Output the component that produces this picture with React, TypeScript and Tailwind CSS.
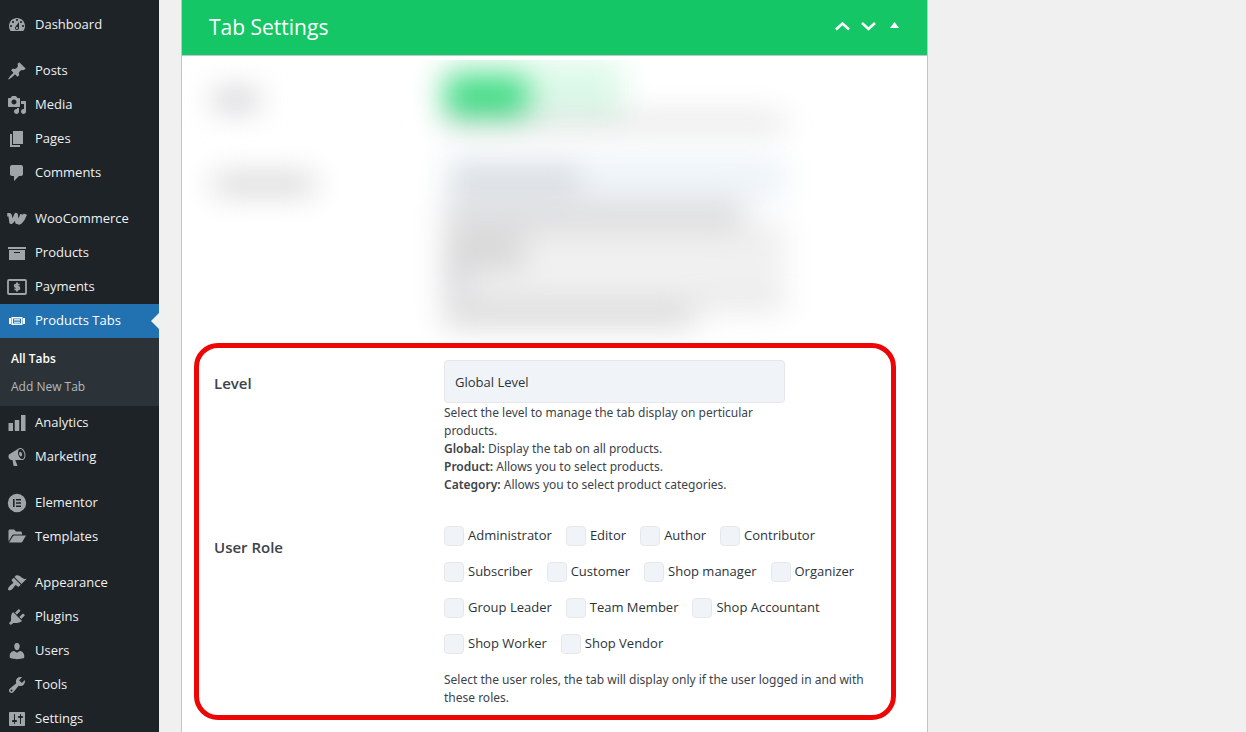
import React from 'react';

type IconProps = { d: string; className?: string };

const Icon = ({ d, className = 'w-5 h-5' }: IconProps) => (
  <svg viewBox="0 0 20 20" className={className} fill="currentColor" fillRule="evenodd" aria-hidden="true">
    <path d={d} />
  </svg>
);

const WooIcon = () => (
  <svg viewBox="0 0 20 20" className="w-5 h-5" fill="none" stroke="currentColor" strokeWidth="3.6" strokeLinejoin="round" aria-hidden="true">
    <path d="M.2 5.800h1.800c.8 0 1.100.4 1.200 1.200l.9 6.200c2.200-1.600 3.800-4 5-7.600l.9 7.600c2.600-1.600 3.900-4 4.900-7.800" />
    <path d="M10.500 13.200c1.200 1 2.400.6 3.400-.4 2-2 3.200-4.400 4.400-7.600" />
  </svg>
);

const PaymentsIcon = () => (
  <svg viewBox="0 0 20 20" className="w-5 h-5" fill="none" stroke="currentColor" aria-hidden="true">
    <rect x="1" y="3" width="18" height="14" rx="1" strokeWidth="1.8" />
    <path d="M12.600 7.600H8.900a1.200 1.200 0 0 0 0 2.400h2.200a1.200 1.200 0 0 1 0 2.400H7.400M10 5.500v9" strokeWidth="1.900" />
  </svg>
);

const ElementorIcon = () => (
  <svg viewBox="0 0 20 20" className="w-5 h-5" fill="currentColor" fillRule="evenodd" aria-hidden="true">
    <path d="M10 .8a9.200 9.200 0 1 0 0 18.400A9.200 9.200 0 0 0 10 .8zM6 6h1.600v8H6zM9 6h5v1.500H9zM9 9.250h5v1.500H9zM9 12.500h5V14H9z" />
  </svg>
);

const paths = {
  dashboard: 'M3.76 16h12.48c1.1-1.37 1.76-3.11 1.76-5 0-4.42-3.58-8-8-8s-8 3.58-8 8c0 1.89.66 3.63 1.76 5zM10 4c.55 0 1 .45 1 1s-.45 1-1 1-1-.45-1-1 .45-1 1-1zM6 6c.55 0 1 .45 1 1s-.45 1-1 1-1-.45-1-1 .45-1 1-1zm8 0c.55 0 1 .45 1 1s-.45 1-1 1-1-.45-1-1 .45-1 1-1zm-5.37 5.55L12 7v6c0 1.1-.9 2-2 2s-2-.9-2-2c0-.57.24-1.08.63-1.45zM4 10c.55 0 1 .45 1 1s-.45 1-1 1-1-.45-1-1 .45-1 1-1zm12 0c.55 0 1 .45 1 1s-.45 1-1 1-1-.45-1-1 .45-1 1-1zm-5 3c0-.55-.45-1-1-1s-1 .45-1 1 .45 1 1 1 1-.45 1-1z',
  post: 'M10.44 3.02l1.82-1.82 6.36 6.35-1.83 1.82c-1.05-.68-2.48-.57-3.41.36l-.75.75c-.92.93-1.04 2.35-.35 3.41l-1.83 1.82-2.41-2.41-2.8 2.79c-.42.42-3.38 2.71-3.8 2.29s1.86-3.39 2.28-3.81l2.79-2.79L4.1 9.36l1.83-1.82c1.05.69 2.48.57 3.4-.36l.75-.75c.93-.92 1.05-2.35.36-3.41z',
  media: 'M13 11V4c0-.55-.45-1-1-1h-1.67L9 1H5L3.67 3H2c-.55 0-1 .45-1 1v7c0 .55.45 1 1 1h10c.55 0 1-.45 1-1zM7 4.500c1.380 0 2.500 1.120 2.500 2.500S8.380 9.500 7 9.500 4.500 8.380 4.500 7 5.620 4.500 7 4.500zM14 6h5v10.500c0 1.380-1.120 2.500-2.500 2.500S14 17.880 14 16.500s1.120-2.500 2.500-2.500c.17 0 .34.02.5.05V9h-3V6zm-4 8.050V13h2v3.500c0 1.380-1.120 2.500-2.500 2.500S7 17.880 7 16.500 8.120 14 9.500 14c.17 0 .34.02.5.05z',
  page: 'M6 15V2h10v13H6zm-1 1h8v2H3V5h2v11z',
  comments: 'M5 2h9c1.1 0 2 .9 2 2v7c0 1.1-.9 2-2 2h-2l-5 5v-5H5c-1.1 0-2-.9-2-2V4c0-1.1.9-2 2-2z',
  archive: 'M19 4v2H1V4h18zM2 7h16v10H2V7zm11 3V9H7v1h6z',
  slides: 'M4.500 14V6h11v8h-11zM2 13V7h2v6H2zm4-5.500v5h8v-5H6zM16 7h2v6h-2V7zm-3 2.400V8.300H7v1.100h6zm0 2.400v-1.100H7v1.100h6z',
  chart: 'M18.500 18V2h-4.500v16h4.500zm-6.250 0V7h-4.500v11h4.500zM6 18v-8H1.500v8H6z',
  megaphone: 'M18.15 5.94c.46 1.62.38 3.22-.02 4.48-.42 1.28-1.26 2.18-2.3 2.48-.16.06-.26.06-.4.06-.06.02-.12.02-.18.02-.06.02-.14.02-.22.02h-6.8l2.22 5.5c.02.14-.06.26-.14.34-.08.1-.24.16-.34.16H6.95c-.1 0-.26-.06-.34-.16-.08-.08-.16-.2-.14-.34l-1-5.5H4.25l-.02-.02c-.5.06-1.08-.18-1.54-.62s-.88-1.08-1.06-1.88c-.24-.8-.2-1.56-.02-2.2.18-.62.58-1.08 1.06-1.3l.02-.02 9-5.4c.1-.06.18-.1.24-.16.06-.04.14-.08.24-.12.16-.08.28-.12.5-.18 1.04-.3 2.24.1 3.22.98s1.84 2.24 2.26 3.86zm-2.58 5.98h-.02c.4-.1.74-.34 1.04-.7.58-.7.86-1.76.86-3.04 0-.64-.1-1.3-.28-1.98-.34-1.36-1.02-2.5-1.78-3.24s-1.68-1.1-2.46-.88c-.82.22-1.4.96-1.7 2-.32 1.04-.28 2.36.06 3.72.38 1.36 1 2.5 1.8 3.24.78.74 1.62 1.1 2.48.88zm-2.54-7.08c.22-.04.42-.02.62.04.38.16.76.48 1.02 1s.42 1.2.42 1.78c0 .3-.04.56-.12.8-.18.48-.44.84-.86.94-.34.1-.8-.06-1.14-.4s-.64-.86-.78-1.5c-.18-.62-.12-1.24.02-1.72s.48-.84.82-.94z',
  folder: 'M1.500 14.500V4c0-.9.6-1.500 1.500-1.500h4l2 2h4.500c.9 0 1.500.6 1.500 1.500v1.500H6.800c-.8 0-1.300.3-1.700 1L1.500 14.500zM2 15.500L6 9.200c.3-.5.7-.7 1.200-.7H19l-3.600 6.200c-.3.500-.7.800-1.300.8H2z',
  appearance: 'M14.48 11.06L7.41 3.99l1.5-1.5c.5-.56 2.3-.47 3.51.32 1.21.8 1.43 1.28 2.91 2.1 1.18.64 2.45 1.26 4.45.85zm-.71.71L6.7 4.7 4.93 6.47c-.39.39-.39 1.02 0 1.41l1.06 1.06c.39.39.39 1.03 0 1.42-.6.6-1.43 1.11-2.21 1.69-.35.26-.7.53-1.01.84C1.43 14.23.4 16.08 1.4 17.07c.99 1 2.84-.03 4.18-1.36.31-.31.58-.66.85-1.02.57-.78 1.08-1.61 1.69-2.21.39-.39 1.02-.39 1.41 0l1.06 1.06c.39.39 1.02.39 1.41 0z',
  plugins: 'M13.11 4.36L9.87 7.6 8 5.73l3.24-3.24c.35-.34 1.05-.2 1.56.32.52.51.66 1.21.31 1.55zm-8 1.77l.91-1.12 9.01 9.01-1.19.84c-.71.71-2.63 1.16-3.82 1.16H6.14L4.9 17.26c-.59.59-1.54.59-2.12 0-.59-.58-.59-1.53 0-2.12l1.24-1.24v-3.88c0-1.13.4-3.19 1.09-3.89zm7.26 3.97l3.24-3.24c.34-.35 1.04-.21 1.55.31.52.51.66 1.21.31 1.55l-3.24 3.25z',
  users: 'M10 9.25c-2.27 0-2.73-3.44-2.73-3.44C7 4.02 7.82 2 9.97 2c2.16 0 2.98 2.02 2.71 3.81 0 0-.41 3.44-2.68 3.44zm0 2.57L12.72 10c2.39 0 4.52 2.33 4.52 4.53v2.49s-3.65 1.13-7.24 1.13c-3.65 0-7.24-1.13-7.24-1.13v-2.49c0-2.25 1.94-4.48 4.47-4.48z',
  tools: 'M16.68 9.77c-1.34 1.34-3.3 1.67-4.95.99l-5.41 6.52c-.99.99-2.59.99-3.58 0s-.99-2.59 0-3.57l6.52-5.42c-.68-1.65-.35-3.61.99-4.95 1.28-1.28 3.12-1.62 4.72-1.06l-2.89 2.89 2.82 2.82 2.86-2.87c.53 1.58.18 3.39-1.08 4.65zM3.81 16.21c.4.39 1.04.39 1.43 0 .4-.4.4-1.04 0-1.43-.39-.4-1.03-.4-1.43 0-.39.39-.39 1.03 0 1.43z',
  settings: 'M18 16V4c0-.55-.45-1-1-1H3c-.55 0-1 .45-1 1v12c0 .55.45 1 1 1h14c.55 0 1-.45 1-1zM8 11h1c.55 0 1 .45 1 1s-.45 1-1 1H8v1.5c0 .28-.22.5-.5.5s-.5-.22-.5-.5V13H6c-.55 0-1-.45-1-1s.45-1 1-1h1V5.5c0-.28.22-.5.5-.5s.5.22.5.5V11zm5-2h-1c-.55 0-1-.45-1-1s.45-1 1-1h1V5.5c0-.28.22-.5.5-.5s.5.22.5.5V7h1c.55 0 1 .45 1 1s-.45 1-1 1h-1v5.5c0 .28-.22.5-.5.5s-.5-.22-.5-.5V9z',
};

type MenuEntry = { label: string; icon: React.ReactNode; sub?: string[] };

// One inner array per block of the admin menu
const menu: MenuEntry[][] = [
  [{ label: 'Dashboard', icon: <Icon d={paths.dashboard} /> }],
  [
    { label: 'Posts', icon: <Icon d={paths.post} /> },
    { label: 'Media', icon: <Icon d={paths.media} /> },
    { label: 'Pages', icon: <Icon d={paths.page} /> },
    { label: 'Comments', icon: <Icon d={paths.comments} /> },
  ],
  [
    { label: 'WooCommerce', icon: <WooIcon /> },
    { label: 'Products', icon: <Icon d={paths.archive} /> },
    { label: 'Payments', icon: <PaymentsIcon /> },
    { label: 'Products Tabs', icon: <Icon d={paths.slides} />, sub: ['All Tabs', 'Add New Tab'] },
    { label: 'Analytics', icon: <Icon d={paths.chart} /> },
    { label: 'Marketing', icon: <Icon d={paths.megaphone} /> },
  ],
  [
    { label: 'Elementor', icon: <ElementorIcon /> },
    { label: 'Templates', icon: <Icon d={paths.folder} /> },
  ],
  [
    { label: 'Appearance', icon: <Icon d={paths.appearance} /> },
    { label: 'Plugins', icon: <Icon d={paths.plugins} /> },
    { label: 'Users', icon: <Icon d={paths.users} /> },
    { label: 'Tools', icon: <Icon d={paths.tools} /> },
    { label: 'Settings', icon: <Icon d={paths.settings} /> },
  ],
];

const roles = [
  'Administrator', 'Editor', 'Author', 'Contributor',
  'Subscriber', 'Customer', 'Shop manager', 'Organizer',
  'Group Leader', 'Team Member', 'Shop Accountant',
  'Shop Worker', 'Shop Vendor',
];

const MenuItem = ({ label, icon, sub }: MenuEntry) => (
  <li>
    <a
      href="#"
      className={sub
        ? 'relative flex items-center gap-2 h-[34px] pl-[7px] bg-[#2271b1] text-white'
        : 'flex items-center gap-2 h-[34px] pl-[7px] text-[#f0f0f1] hover:text-[#72aee6]'}
    >
      <span className={sub ? 'text-white' : 'text-[#a0a5aa]'}>{icon}</span>
      {label}
      {sub && <span className="absolute right-0 border-8 border-transparent border-r-[#f0f0f1]" />}
    </a>
    {sub && (
      <ul className="bg-[#2c3338] pt-[7px] pb-[5px]">
        {sub.map((s, i) => (
          <li key={s}>
            <a href="#" className={i === 0 ? 'flex items-center h-7 pl-[11px] text-[12px] font-semibold text-white' : 'flex items-center h-7 pl-[11px] text-[12px] text-[#b4b9be]'}>{s}</a>
          </li>
        ))}
      </ul>
    )}
  </li>
);

const Sidebar = () => (
  <nav className="w-[159px] shrink-0 bg-[#1d2327] pt-2 text-[13px] flex flex-col gap-3">
    {menu.map((group) => (
      <ul key={group[0].label}>
        {group.map((item) => <MenuItem key={item.label} {...item} />)}
      </ul>
    ))}
  </nav>
);

const PanelHeader = () => (
  <header className="flex items-center justify-between h-14 pl-[27px] pr-[25px] bg-[#14c665] border-b border-[#c3c4c7] text-white">
    <h2 className="text-[21px]">Tab Settings</h2>
    <div className="flex items-center gap-[10px] pb-1">
      <button type="button" aria-label="Move up">
        <svg viewBox="0 0 16 16" className="w-4 h-4" fill="none" stroke="currentColor" strokeWidth="2.5"><path d="M2 11.500L8.500 5.500l6.500 6" /></svg>
      </button>
      <button type="button" aria-label="Move down">
        <svg viewBox="0 0 16 16" className="w-4 h-4" fill="none" stroke="currentColor" strokeWidth="2.500"><path d="M2 5l6.500 6L15 5" /></svg>
      </button>
      <button type="button" aria-label="Toggle panel">
        <svg viewBox="0 0 16 16" className="w-4 h-4" fill="currentColor"><path d="M8.500 4l4.500 6h-9z" /></svg>
      </button>
    </div>
  </header>
);

// Settings that are out of focus
const HiddenRows = () => (
  <div className="mt-1 h-[283px] overflow-hidden" aria-hidden="true">
    <div className="flex flex-col gap-7 pl-8 blur-[15px]">
      <div className="flex">
        <div className="w-[230px] pt-8"><div className="w-11 h-4 bg-[#bfc1c5]" /></div>
        <div className="w-[341px]">
          <div className="flex w-[178px] h-14 bg-[#dcf9e8]">
            <div className="w-[84px] h-full pt-4"><div className="h-10 rounded-lg bg-[#3fdc84]" /></div>
          </div>
          <div className="h-3 bg-[#d8d8d8]" />
        </div>
      </div>
      <div className="flex">
        <div className="w-[230px] pt-5"><div className="w-[100px] h-4 bg-[#c9c9c9]" /></div>
        <div className="w-[341px]">
          <div className="flex items-center h-[46px] pl-2 bg-[#eef4f9]"><div className="w-[128px] h-6 bg-[#d5dae0]" /></div>
          <div className="w-[300px] h-6 bg-[#dcdcdd]" />
          <div className="w-[341px] h-2 bg-[#e4e4e5]" />
          <div className="flex h-9 bg-[#f0f0f0]"><div className="w-20 bg-[#d8d8d9]" /></div>
          <div className="flex h-6 bg-[#f1f1f1]"><div className="w-6 bg-[#d4d6da]" /></div>
          <div className="h-4 bg-[#e6e6e6]" />
          <div className="w-[250px] h-4 bg-[#d4d4d5]" />
        </div>
      </div>
    </div>
  </div>
);

const LevelRow = () => (
  <div className="flex">
    <label htmlFor="level" className="w-[230px] shrink-0 pt-[11px] text-[15px] leading-6 font-semibold text-[#3c434a]">Level</label>
    <div className="w-[341px]">
      <select id="level" className="block w-full h-[43px] px-[10px] pt-[2px] appearance-none rounded border border-[#e5e7ea] bg-[#f0f3f8] text-[13px] text-[#2c3338]">
        <option>Global Level</option>
        <option>Product Level</option>
        <option>Category Level</option>
      </select>
      <p className="pt-px pb-1 font-['Noto_Sans',sans-serif] text-[12px] leading-[18px] text-[#3c434a]">
        Select the level to manage the tab display on perticular products.<br />
        <b className="font-semibold">Global:</b> Display the tab on all products.<br />
        <b className="font-semibold">Product:</b> Allows you to select products.<br />
        <b className="font-semibold">Category:</b> Allows you to select product categories.
      </p>
    </div>
  </div>
);

const RoleRow = () => (
  <fieldset className="flex mt-7">
    <legend className="float-left w-[230px] shrink-0 pt-[9px] text-[15px] leading-6 font-semibold text-[#3c434a]">User Role</legend>
    <div className="flex-1">
      <div className="flex flex-wrap gap-x-[14px] gap-y-4">
        {roles.map((role) => (
          <label key={role} className="flex gap-1 text-[13px] leading-[18px] text-[#2c3338]">
            <input type="checkbox" name="role" value={role} className="w-5 h-5 appearance-none rounded border border-[#e5e7ea] bg-[#f0f3f8] checked:bg-[#14c665]" />
            {role}
          </label>
        ))}
      </div>
      <p className="mt-[17px] font-['Noto_Sans',sans-serif] text-[12px] leading-[18px] text-[#3c434a]">
        Select the user roles, the tab will display only if the user logged in and with these roles.
      </p>
    </div>
  </fieldset>
);

export default function App() {
  return (
    <div className="flex min-h-screen bg-[#f0f0f0] font-['Open_Sans',sans-serif]">
      <Sidebar />
      <main className="flex-1 min-w-0 ml-[22px] bg-white border-x border-[#c3c4c7]">
        <PanelHeader />
        <HiddenRows />
        <section className="ml-3 mr-[31px] border-[5px] border-[#ec0606] rounded-[24px] pt-3 pb-2 pl-[15px] pr-2">
          <LevelRow />
          <RoleRow />
        </section>
      </main>
      <aside className="w-[318px] shrink-0" />
    </div>
  );
}
